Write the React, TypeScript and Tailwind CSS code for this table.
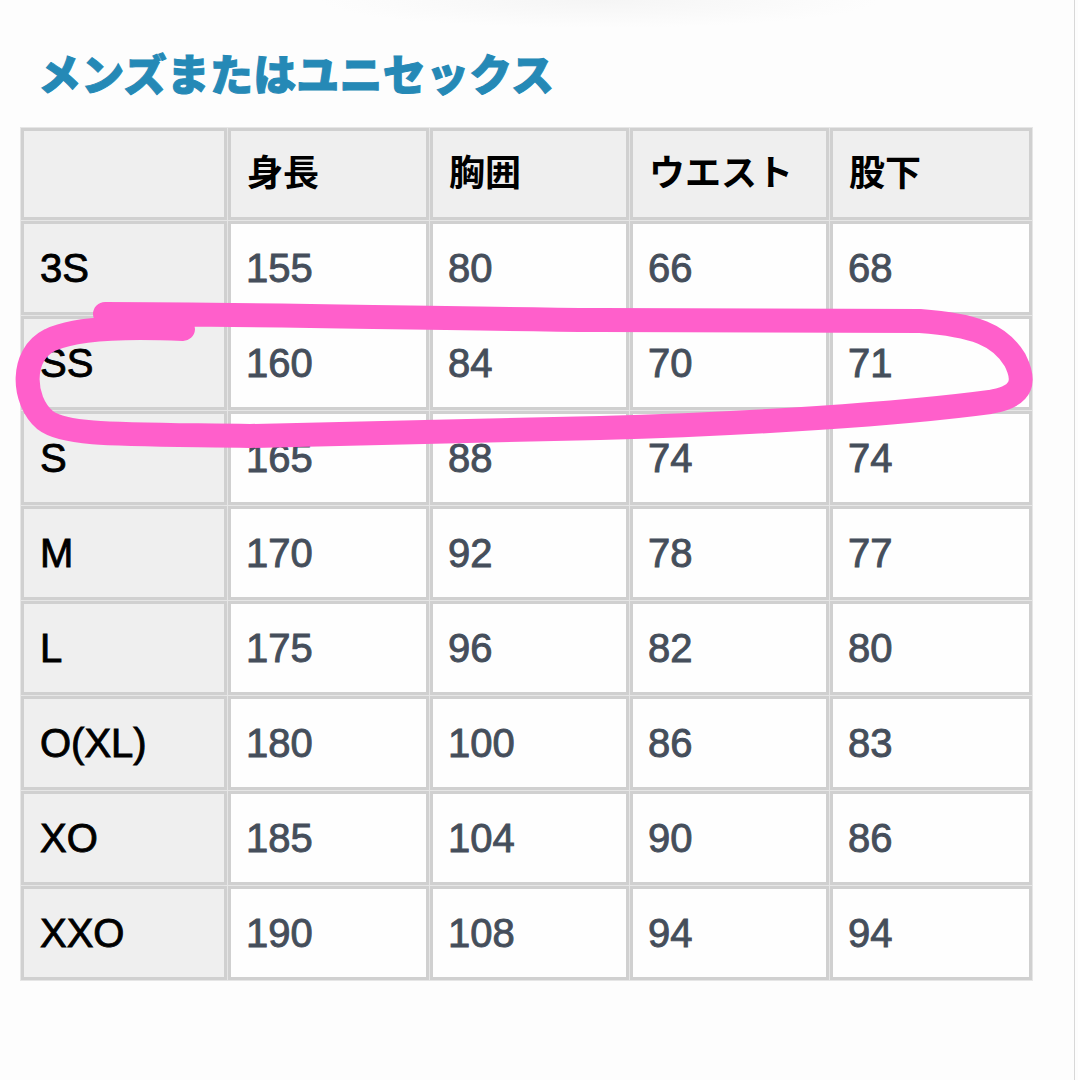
import React from "react";

const headers = ["身長", "胸囲", "ウエスト", "股下"];

const rows: [string, number, number, number, number][] = [
  ["3S", 155, 80, 66, 68],
  ["SS", 160, 84, 70, 71],
  ["S", 165, 88, 74, 74],
  ["M", 170, 92, 78, 77],
  ["L", 175, 96, 82, 80],
  ["O(XL)", 180, 100, 86, 83],
  ["XO", 185, 104, 90, 86],
  ["XXO", 190, 108, 94, 94],
];

const latin = "font-['Liberation_Sans','Noto_Sans_CJK_JP',sans-serif]";
const cjk = "font-['Noto_Sans_CJK_JP','Noto_Sans',sans-serif]";

export default function App() {
  return (
    <div className="relative w-[1078px] h-[1080px] overflow-hidden bg-[#fdfdfd] bg-[radial-gradient(ellipse_280px_28px_at_600px_0px,#f5f5f5,transparent)]">
      <div className="w-[1075px] h-full border-r border-[#d8d8d8] px-[20px]">
        {/* title */}
        <h1 className={`${cjk} pt-[51px] pl-[18px] h-[94px] text-[43px] leading-[43px] font-black tracking-[0.2px] text-[#2589b6] [-webkit-text-stroke:1px]`}>
          メンズまたはユニセックス
        </h1>

        {/* size table */}
        <table className="mt-[33px] w-[1012px] table-fixed border-separate border-spacing-[1px] bg-[#e6e6e6]">
          <colgroup>
            <col className="w-[206px]" />
            <col className="w-[201px]" />
            <col className="w-[199px]" />
            <col className="w-[199px]" />
            <col className="w-[202px]" />
          </colgroup>
          <thead>
            <tr className="h-[92px]">
              <th className="border-[3px] border-[#d0d0d0] bg-[#efefef]" />
              {headers.map((h) => (
                <th
                  key={h}
                  className={`${cjk} border-[3px] border-[#d0d0d0] bg-[#efefef] pl-[16px] pb-[8px] text-left text-[36px] font-bold text-black`}
                >
                  {h}
                </th>
              ))}
            </tr>
          </thead>
          <tbody>
            {rows.map(([size, ...vals]) => (
              <tr key={size} className="h-[94px]">
                <td className={`${latin} border-[3px] border-[#d0d0d0] bg-[#efefef] pl-[16px] text-[40px] text-black [-webkit-text-stroke:0.9px]`}>
                  {size}
                </td>
                {vals.map((v, i) => (
                  <td
                    key={i}
                    className={`${latin} border-[3px] border-[#d0d0d0] bg-[#fefefe] pl-[15px] text-[40px] text-[#454e5b] [-webkit-text-stroke:0.9px]`}
                  >
                    {v}
                  </td>
                ))}
              </tr>
            ))}
          </tbody>
        </table>
      </div>

      {/* hand-drawn highlight loop */}
      <svg className="absolute left-0 top-0 pointer-events-none" width="1078" height="1080" viewBox="0 0 1078 1080">
        <path
          d="M183 329 C140 327 80 326 50 340 C20 355 22 400 45 420 C65 436 120 434 250 436 L600 428 C750 424 900 414 990 402 C1025 396 1025 380 1015 360 C1000 335 975 325 920 321 L600 320 C400 318 250 314 105 314"
          fill="none"
          stroke="#ff5fcb"
          strokeWidth="24"
          strokeLinecap="round"
          strokeLinejoin="round"
        />
      </svg>
    </div>
  );
}
